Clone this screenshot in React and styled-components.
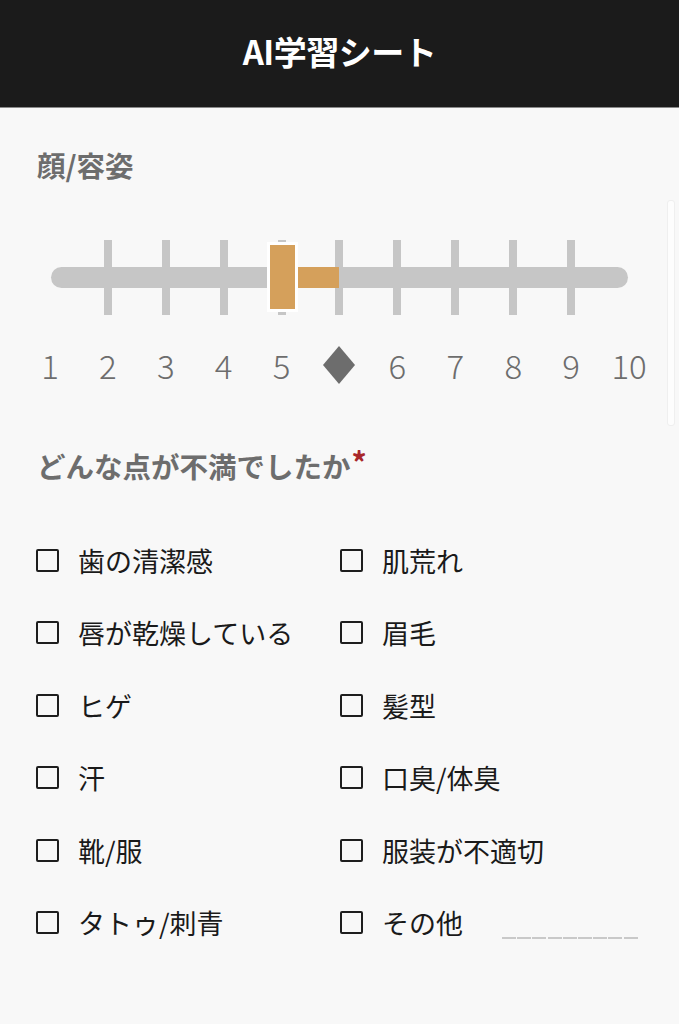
import React from "react";
import styled, { createGlobalStyle } from "styled-components";

const GlobalStyle = createGlobalStyle`
  html, body {
    margin: 0;
    padding: 0;
    background: #f8f8f8;
  }
  body {
    font-family: "Noto Sans CJK JP", "Noto Sans", sans-serif;
  }
`;

const Page = styled.div`
  width: 679px;
  min-height: 1024px;
  background: #f8f8f8;
`;

const Header = styled.header`
  box-sizing: border-box;
  height: 108px;
  padding-bottom: 6px;
  background: #1b1b1b;
  border-bottom: 1px solid #8a8a8a;
  display: flex;
  align-items: center;
  justify-content: center;
`;

const Title = styled.h1`
  margin: 0;
  color: #fff;
  font-size: 33px;
  font-weight: 700;
  letter-spacing: -0.5px;
`;

const Section = styled.section`
  position: relative;
  padding: ${(p) => p.pad || "0"};
`;

const Label = styled.h2`
  margin: 0;
  font-size: 28.5px;
  line-height: 36px;
  font-weight: 700;
  color: #6d6d6d;
  padding-left: 37px;
`;

const Required = styled.span`
  color: #a8282a;
  font-size: 30px;
  line-height: 0;
  vertical-align: 4px;
  margin-left: 1px;
`;

const SliderWrap = styled.div`
  position: relative;
  box-sizing: border-box;
  width: 637px;
  height: 75px;
  padding-top: 27px;
  margin: 57px 0 0 21px;
`;

const Track = styled.div`
  height: 21px;
  margin: 0 30px;
  border-radius: 11px;
  background: #c6c6c6;
`;

const Grid11 = styled.div`
  display: grid;
  grid-template-columns: repeat(11, 1fr);
  width: 637px;
`;

const TickRow = styled(Grid11)`
  position: absolute;
  inset: 0;
`;

const TickCell = styled.div`
  display: flex;
  justify-content: center;
`;

const Tick = styled.div`
  width: 8px;
  height: 75px;
  background: #c6c6c6;
`;

const Fill = styled.div`
  position: absolute;
  top: 27px;
  left: 274px;
  width: 44px;
  height: 21px;
  background: #d5a05b;
`;

const Thumb = styled.div`
  position: absolute;
  top: 2px;
  left: 246px;
  width: 25px;
  height: 64px;
  background: #d5a05b;
  border: 3px solid #fff;
`;

const Numbers = styled(Grid11)`
  margin: 28px 0 0 21px;
  height: 44px;
`;

const Num = styled.div`
  display: flex;
  align-items: center;
  justify-content: center;
  font-size: 33px;
  line-height: 44px;
  font-weight: 300;
  color: #6d6d6d;
`;

const ScrollHint = styled.div`
  position: absolute;
  top: 92px;
  right: 4px;
  width: 6px;
  height: 224px;
  background: #fdfdfd;
  border: 1px solid #efefef;
  border-radius: 3px;
`;

const Options = styled.div`
  display: grid;
  grid-template-columns: 304px 1fr;
  grid-auto-rows: 40px;
  row-gap: 32.6px;
  padding-left: 36px;
  margin-top: 56px;
`;

const Option = styled.label`
  display: flex;
  align-items: center;
  font-size: 27px;
  color: #1a1a1a;
  white-space: nowrap;
`;

const Box = styled.span`
  box-sizing: border-box;
  width: 23px;
  height: 23px;
  border: 2px solid #1e1e1e;
  border-radius: 2px;
  margin-right: 19px;
  flex-shrink: 0;
`;

const Blank = styled.span`
  width: 136px;
  height: 2px;
  margin: 30px 0 0 39px;
  background: repeating-linear-gradient(
    90deg,
    #c9c9c9 0 14px,
    transparent 14px 15.2px
  );
`;

const Diamond = () => (
  <svg width="32" height="38" viewBox="0 0 32 38">
    <polygon points="16,0 32,19 16,38 0,19" fill="#6d6d6d" />
  </svg>
);

const options = [
  "歯の清潔感",
  "肌荒れ",
  "唇が乾燥している",
  "眉毛",
  "ヒゲ",
  "髪型",
  "汗",
  "口臭/体臭",
  "靴/服",
  "服装が不適切",
  "タトゥ/刺青",
  "その他",
];

const labels = ["1", "2", "3", "4", "5", null, "6", "7", "8", "9", "10"];

export default function App() {
  return (
    <Page>
      <GlobalStyle />
      <Header>
        <Title>AI学習シート</Title>
      </Header>

      <Section pad="39px 0 0">
        <Label>顔/容姿</Label>
        <ScrollHint />
        <SliderWrap>
          <Track />
          <TickRow>
            {labels.map((_, i) => (
              <TickCell key={i}>{i > 0 && i < 10 && <Tick />}</TickCell>
            ))}
          </TickRow>
          <Fill />
          <Thumb />
        </SliderWrap>
        <Numbers>
          {labels.map((n, i) => (
            <Num key={i}>{n === null ? <Diamond /> : n}</Num>
          ))}
        </Numbers>
      </Section>

      <Section pad="61px 0 0">
        <Label>
          どんな点が不満でしたか<Required>*</Required>
        </Label>
        <Options>
          {options.map((o) => (
            <Option key={o}>
              <Box />
              {o}
              {o === "その他" && <Blank />}
            </Option>
          ))}
        </Options>
      </Section>
    </Page>
  );
}
